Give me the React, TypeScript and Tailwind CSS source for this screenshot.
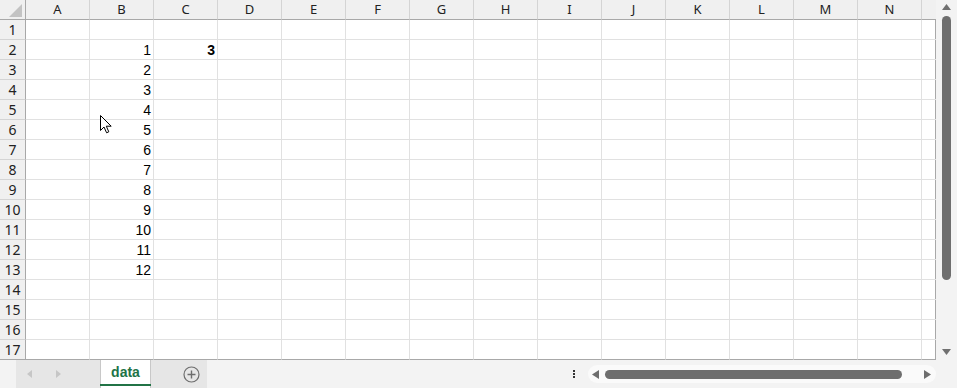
import React from 'react';

const COLS = ['A', 'B', 'C', 'D', 'E', 'F', 'G', 'H', 'I', 'J', 'K', 'L', 'M', 'N'];
const ROWS = Array.from({ length: 17 }, (_, i) => i + 1);

// values keyed by "col-row"
const cells: Record<string, { v: string; bold?: boolean }> = { 'C-2': { v: '3', bold: true } };
for (let r = 2; r <= 13; r++) cells[`B-${r}`] = { v: String(r - 1) };

function Corner() {
    return (
        <div className="bg-[#f0f0f0] border-r border-b border-[#a8a8a8] relative">
            <svg width="13" height="13" viewBox="0 0 13 13" className="absolute left-[9px] top-[4px]">
                <polygon points="13,0 13,13 0,13" fill="#c3c3c3" />
            </svg>
        </div>
    );
}

function Cursor() {
    return (
        <svg width="13" height="19" viewBox="0 0 13 19" className="absolute left-[100px] top-[115px] pointer-events-none">
            <path d="M0.5 0.5 L0.5 15.5 L4 12 L6.6 17.8 L8.8 16.8 L6.3 11.2 L11.2 11.2 Z" fill="#fff" stroke="#000" strokeWidth="1" strokeLinejoin="miter" />
        </svg>
    );
}

export default function App() {
    return (
        <div className="w-[957px] h-[388px] bg-[#f3f3f3] flex flex-col overflow-hidden text-[#000]" style={{ fontFamily: '"Liberation Sans", Arial, sans-serif' }}>
            <div className="flex h-[360px] relative">
                <div className="w-[936px] grid grid-cols-[26px_repeat(14,64px)_14px] grid-rows-[repeat(18,20px)] bg-white border-r border-[#a8a8a8]">
                    <Corner />
                    {COLS.map(c => (
                        <div key={c} className="bg-[#f0f0f0] border-r border-[#d4d4d4] border-b border-b-[#a8a8a8] flex items-center justify-center text-[13px] text-[#222] leading-none pb-[1px]" style={{ fontFamily: '"Noto Sans", sans-serif' }}>
                            {c}
                        </div>
                    ))}
                    <div className="bg-[#f0f0f0] border-b border-[#a8a8a8]" />
                    {ROWS.map(r => (
                        <React.Fragment key={r}>
                            <div className={`bg-[#f0f0f0] border-r border-r-[#a8a8a8] border-b ${r === 17 ? 'border-b-[#a8a8a8]' : 'border-b-[#d4d4d4]'} flex items-center justify-center text-[14px] text-[#222] leading-none`} style={{ fontFamily: '"Noto Sans", sans-serif' }}>
                                {r}
                            </div>
                            {COLS.map(c => {
                                const cell = cells[`${c}-${r}`];
                                return (
                                    <div key={c} className={`border-r border-r-[#e1e1e1] border-b ${r === 17 ? 'border-b-[#a8a8a8]' : 'border-b-[#e1e1e1]'} flex items-center justify-end pr-[2px] pt-[1px] text-[14px] leading-none ${cell?.bold ? 'font-bold' : ''}`}>
                                        {cell?.v}
                                    </div>
                                );
                            })}
                            <div className={`border-b ${r === 17 ? 'border-b-[#a8a8a8]' : 'border-b-[#e1e1e1]'}`} />
                        </React.Fragment>
                    ))}
                </div>
                <div className="w-[21px] flex flex-col items-center py-[4px]">
                    <svg width="9" height="6" viewBox="0 0 9 6"><polygon points="4.5,0 9,6 0,6" fill="#707070" /></svg>
                    <div className="w-[9px] h-[264px] mt-[6px] rounded-full bg-[#6e6e6e]" />
                    <div className="flex-1" />
                    <svg width="9" height="6" viewBox="0 0 9 6" className="mb-[1px]"><polygon points="0,0 9,0 4.5,6" fill="#707070" /></svg>
                </div>
                <Cursor />
            </div>

            <div className="h-[28px] flex items-stretch">
                <div className="w-[16px]" />
                <div className="w-[84px] bg-[#e6e6e6] flex items-center">
                    <svg width="5" height="8" viewBox="0 0 5 8" className="ml-[11px]"><polygon points="5,0 5,8 0,4" fill="#c6c6c6" /></svg>
                    <svg width="5" height="8" viewBox="0 0 5 8" className="ml-[24px]"><polygon points="0,0 0,8 5,4" fill="#c6c6c6" /></svg>
                </div>
                <div className="w-[51px] bg-white border-x border-[#c8c8c8] flex flex-col">
                    <div className="flex-1 flex items-center justify-center text-[14px] font-bold text-[#217346] pt-[1px]">data</div>
                    <div className="h-[2px] bg-[#217346] mb-[2px] -mx-px" />
                </div>
                <div className="w-[56px] bg-[#e6e6e6] flex items-center">
                    <svg width="17" height="17" viewBox="0 0 17 17" className="ml-[32px]">
                        <circle cx="8.5" cy="8.5" r="7.5" fill="none" stroke="#6e6e6e" strokeWidth="1.2" />
                        <path d="M8.5 4.5 V12.5 M4.5 8.5 H12.5" stroke="#6e6e6e" strokeWidth="1.4" />
                    </svg>
                </div>
                <div className="flex-1 flex items-center">
                    <div className="ml-[366px] flex flex-col gap-[1px]">
                        <div className="w-[2px] h-[2px] bg-[#333]" />
                        <div className="w-[2px] h-[2px] bg-[#333]" />
                        <div className="w-[2px] h-[2px] bg-[#333]" />
                    </div>
                    <div className="ml-[13px] w-[348px] h-[18px] rounded-full bg-[#fafafa] flex items-center px-[4px]">
                        <svg width="7" height="9" viewBox="0 0 7 9"><polygon points="7,0 7,9 0,4.5" fill="#6e6e6e" /></svg>
                        <div className="ml-[6px] w-[297px] h-[9px] rounded-full bg-[#6e6e6e]" />
                        <div className="flex-1" />
                        <svg width="7" height="9" viewBox="0 0 7 9" className="mr-[1px]"><polygon points="0,0 0,9 7,4.5" fill="#6e6e6e" /></svg>
                    </div>
                </div>
            </div>
        </div>
    );
}
